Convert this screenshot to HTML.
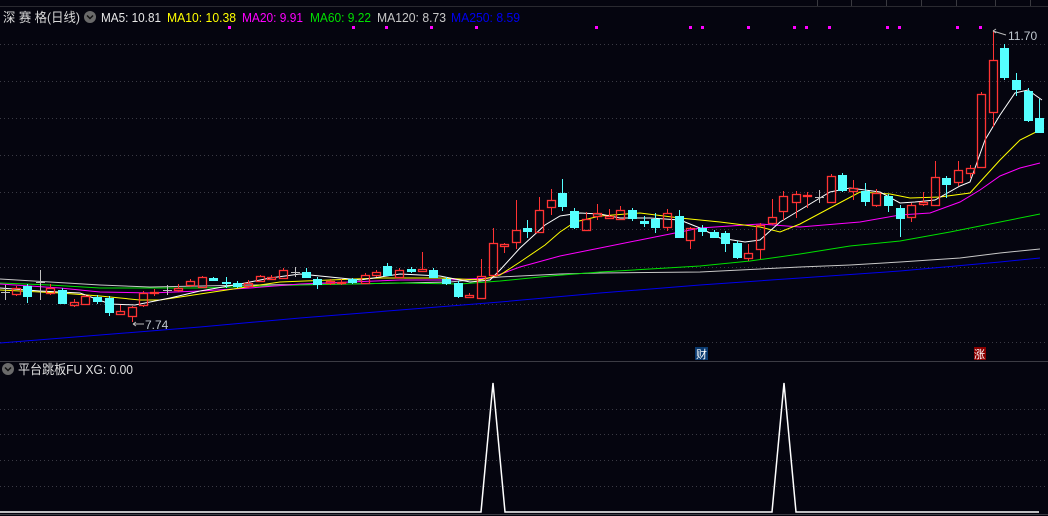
<!DOCTYPE html>
<html><head><meta charset="utf-8">
<style>
html,body{margin:0;padding:0;background:#05050f;width:1048px;height:516px;overflow:hidden}
svg{display:block}
text{font-family:"Liberation Sans","Noto Sans CJK SC",sans-serif}
</style></head><body>
<svg id="s" width="1048" height="516" viewBox="0 0 1048 516" xmlns="http://www.w3.org/2000/svg">
<rect width="1048" height="516" fill="#05050f"/>
<g stroke="#3a3a44" stroke-width="1" stroke-dasharray="1,3">
<line x1="0" y1="44.5" x2="1048" y2="44.5"/><line x1="0" y1="81.5" x2="1048" y2="81.5"/>
<line x1="0" y1="118.5" x2="1048" y2="118.5"/><line x1="0" y1="155.5" x2="1048" y2="155.5"/>
<line x1="0" y1="192.5" x2="1048" y2="192.5"/><line x1="0" y1="229.5" x2="1048" y2="229.5"/>
<line x1="0" y1="267.5" x2="1048" y2="267.5"/><line x1="0" y1="304.5" x2="1048" y2="304.5"/>
<line x1="0" y1="342.5" x2="1048" y2="342.5"/>
<line x1="0" y1="409.5" x2="1048" y2="409.5"/><line x1="0" y1="434.5" x2="1048" y2="434.5"/>
<line x1="0" y1="460.5" x2="1048" y2="460.5"/><line x1="0" y1="486.5" x2="1048" y2="486.5"/>
</g>
<line x1="0" y1="361.5" x2="1048" y2="361.5" stroke="#3c3c44"/>
<line x1="0" y1="514.5" x2="1048" y2="514.5" stroke="#3c3c44"/>
<line x1="0" y1="6.5" x2="1048" y2="6.5" stroke="#2a2a30"/>
<g stroke="#3a3a40"><line x1="817.5" y1="0" x2="817.5" y2="6"/><line x1="851.5" y1="0" x2="851.5" y2="6"/><line x1="886.5" y1="0" x2="886.5" y2="6"/><line x1="921.5" y1="0" x2="921.5" y2="6"/><line x1="956.5" y1="0" x2="956.5" y2="6"/><line x1="995.5" y1="0" x2="995.5" y2="6"/><line x1="1030.5" y1="0" x2="1030.5" y2="6"/></g>
<g id="ma" fill="none" stroke-width="1"></g>
<g id="cd"></g>
<g id="dots" fill="#ff00ff"></g>
<!-- header -->
<text x="3" y="22" font-size="13" fill="#d8d8d8" textLength="77" lengthAdjust="spacingAndGlyphs">深 赛 格(日线)</text>
<circle cx="90" cy="17" r="6" fill="#6a6a6a"/><path d="M87 15.5 L90 18.5 L93 15.5" stroke="#111" stroke-width="1.5" fill="none"/>
<g font-size="13" lengthAdjust="spacingAndGlyphs">
<text x="101" y="22" fill="#e8e8e8" textLength="60" lengthAdjust="spacingAndGlyphs">MA5: 10.81</text>
<text x="167" y="22" fill="#ffff00" textLength="69" lengthAdjust="spacingAndGlyphs">MA10: 10.38</text>
<text x="242" y="22" fill="#ff00ff" textLength="61" lengthAdjust="spacingAndGlyphs">MA20: 9.91</text>
<text x="310" y="22" fill="#00e000" textLength="61" lengthAdjust="spacingAndGlyphs">MA60: 9.22</text>
<text x="377" y="22" fill="#c8c8c8" textLength="69" lengthAdjust="spacingAndGlyphs">MA120: 8.73</text>
<text x="451" y="22" fill="#0000ee" textLength="69" lengthAdjust="spacingAndGlyphs">MA250: 8.59</text>
</g>
<!-- price labels -->
<path d="M993 31 L1006 35 M993 31 L996 29 M993 31 L996 33" stroke="#bbb" fill="none"/>
<text x="1008" y="40" font-size="12" fill="#c0c8d0">11.70</text>
<path d="M133 324 L144 324 M133 324 L136 322 M133 324 L136 326" stroke="#bbb" fill="none"/>
<text x="145" y="329" font-size="12" fill="#c0c8d0">7.74</text>
<rect x="695" y="347" width="13" height="13" fill="#0a3a70"/><text x="696" y="358" font-size="11" fill="#fff">财</text>
<rect x="974" y="347" width="12" height="13" fill="#8a0000"/><text x="974" y="358" font-size="11" fill="#fff">涨</text>
<!-- lower panel -->
<circle cx="8" cy="369" r="6" fill="#6a6a6a"/><path d="M5 367.5 L8 370.5 L11 367.5" stroke="#111" stroke-width="1.5" fill="none"/>
<text x="18" y="374" font-size="13" fill="#e0e0e0" textLength="115" lengthAdjust="spacingAndGlyphs">平台跳板FU  XG: 0.00</text>
<polyline points="0,512 481,512 493,383 505,512 772,512 784,383 796,512 1039,512" fill="none" stroke="#fff" stroke-width="1.5"/>
</svg>
<script>
var NS="http://www.w3.org/2000/svg";
function el(p,t,a){var e=document.createElementNS(NS,t);for(var k in a)e.setAttribute(k,a[k]);p.appendChild(e);return e;}
var ma=document.getElementById('ma');
var L=[
["#c8c8c8","0,279 50,282 100,285 150,287 250,285 350,284 450,282 500,277 560,274 600,273 700,272 800,267 850,265 900,262 960,258 1000,253 1040,249"],
["#00e000","0,283 50,285 100,288 200,288 300,285 400,283 460,284 500,281 550,276 600,272 650,269 700,266 750,261 800,254 850,246 900,241 950,232 1000,222 1040,214"],
["#0000ee","0,343 100,335 200,327 300,318 400,310 500,302 600,293 700,285 800,278 900,271 1000,262 1040,258"],
["#ff00ff","0,284 60,288 100,292 150,293 200,291 250,288 300,284 350,282 400,280 450,280 490,278 520,267 560,256 600,248 640,240 680,232 700,228 760,224 800,227 860,222 900,215 930,213 960,202 980,190 1000,176 1020,168 1040,163"],
["#ffff00","0,290 60,293 100,296 140,300 160,300 200,294 240,288 280,282 330,280 380,278 440,278 480,280 500,275 520,262 545,245 560,232 575,222 600,216 640,213 680,218 720,222 760,227 780,232 800,224 830,208 860,192 890,194 910,198 940,197 970,193 1000,160 1020,140 1044,128"],
["#ffffff","0,288 40,291 80,293 110,304 135,305 150,302 170,298 200,291 240,284 270,278 300,274 330,277 360,280 400,274 440,276 470,282 490,280 500,270 520,248 545,225 560,216 580,213 600,214 620,218 650,218 680,220 700,228 720,238 745,242 760,240 780,222 800,210 830,192 850,188 880,192 900,203 915,202 935,200 960,186 970,182 985,140 1000,115 1015,93 1028,90 1042,100"]];
L.forEach(function(l){el(ma,'polyline',{points:l[1],stroke:l[0]});});
var C=[
[1,292,293,285,300,'g'],[12,288,294,286,296,'r'],[23,286,296,284,303,'c'],[36,282,283,270,300,'g'],[46,288,293,284,295,'r'],
[58,290,303,288,304,'c'],[70,302,305,299,307,'r'],[81,296,304,295,305,'r'],[93,297,301,295,304,'c'],[105,298,312,296,316,'c'],
[116,311,314,305,315,'r'],[128,307,316,306,322,'r'],[139,293,305,291,307,'r'],[150,292,293,289,296,'r'],[163,290,291,285,295,'g'],
[174,288,290,284,292,'r'],[186,281,285,279,287,'r'],[198,277,287,276,288,'r'],[209,278,280,277,281,'c'],[222,282,283,277,288,'c'],
[233,283,286,281,288,'c'],[244,283,286,280,288,'r'],[256,276,281,275,282,'r'],[267,277,279,275,280,'r'],[279,270,278,268,279,'r'],
[291,272,273,267,277,'g'],[302,272,277,268,278,'c'],[313,279,284,277,289,'c'],[326,281,283,279,285,'r'],[337,282,283,279,285,'r'],
[348,279,282,278,284,'c'],[361,275,283,273,284,'r'],[372,272,275,270,277,'r'],[383,266,275,263,276,'c'],[395,270,277,268,278,'r'],
[407,269,271,267,273,'c'],[418,269,271,252,272,'r'],[429,270,277,268,278,'c'],[442,279,283,277,285,'c'],[454,283,296,281,298,'c'],
[465,295,297,293,298,'r'],[477,276,298,259,299,'r'],[489,243,275,228,276,'r'],[500,244,246,243,253,'r'],[512,230,242,200,249,'r'],
[523,228,231,220,238,'c'],[535,210,232,197,233,'r'],[547,200,207,189,215,'r'],[558,193,206,179,211,'c'],[570,211,227,208,229,'c'],
[582,219,230,212,231,'r'],[593,213,216,204,220,'r'],[605,216,218,209,219,'r'],[616,210,219,206,220,'r'],[628,210,218,208,221,'c'],
[640,221,223,216,227,'c'],[651,219,227,213,233,'c'],[663,213,227,209,231,'r'],[675,216,237,210,238,'c'],[686,228,240,227,249,'r'],
[698,228,231,225,236,'c'],[710,232,237,230,238,'c'],[721,233,243,231,252,'c'],[733,243,257,241,259,'c'],[744,253,258,244,261,'r'],
[756,225,249,223,259,'r'],[768,217,223,199,225,'r'],[779,196,211,191,220,'r'],[792,194,202,191,218,'r'],[803,195,196,192,208,'r'],
[815,197,198,190,203,'g'],[827,176,202,174,203,'r'],[838,175,190,173,192,'c'],[849,188,191,180,200,'r'],[861,191,201,183,206,'c'],
[872,193,205,189,207,'r'],[884,196,205,194,212,'c'],[896,208,218,205,237,'c'],[907,205,217,203,222,'r'],[919,202,204,192,206,'r'],
[931,177,205,161,206,'r'],[942,178,184,176,198,'c'],[954,170,182,161,186,'r'],[966,168,173,165,178,'r'],[977,94,167,92,168,'r'],
[989,60,112,30,127,'r'],[1000,48,77,44,80,'c'],[1012,80,89,73,96,'c'],[1024,91,120,88,122,'c'],[1035,118,132,99,133,'c']];
var cd=document.getElementById('cd');
C.forEach(function(c){
 var x=c[0],w=9,cx=x+4.5,col=c[5]=='r'?'#ff3333':c[5]=='c'?'#55ffff':'#c0c0c0';
 if(c[5]=='g'){el(cd,'line',{x1:cx,y1:c[3],x2:cx,y2:c[4],stroke:col});el(cd,'line',{x1:x,y1:c[1]+.5,x2:x+w,y2:c[1]+.5,stroke:col});return;}
 el(cd,'line',{x1:cx,y1:c[3],x2:cx,y2:c[1],stroke:col});
 el(cd,'line',{x1:cx,y1:c[2],x2:cx,y2:c[4],stroke:col});
 var h=Math.max(c[2]-c[1],1);
 if(c[5]=='r')el(cd,'rect',{x:x+.5,y:c[1]+.5,width:w-1,height:h,fill:'none',stroke:col,'stroke-width':1.3});
 else el(cd,'rect',{x:x,y:c[1],width:w,height:h+1,fill:col});
});
var d=document.getElementById('dots');
[229,353,386,431,476,596,690,702,748,794,806,829,887,899,957,980].forEach(function(x){el(d,'rect',{x:x-1,y:26,width:3,height:3});});
</script>
</body></html>
